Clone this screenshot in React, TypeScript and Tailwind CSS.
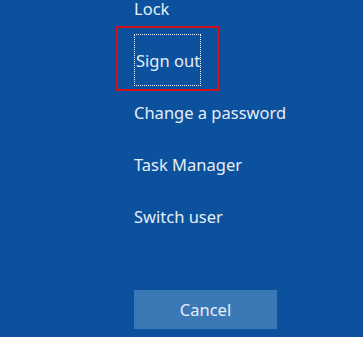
export default function App() {
  const items = ["Lock", "Sign out", "Change a password", "Task Manager", "Switch user"];
  return (
    <div
      className="w-[363px] h-[337px] overflow-hidden bg-[#0b519d] text-[#e6edf5]"
      style={{ fontFamily: '"Noto Sans", "Open Sans", sans-serif' }}
    >
      <div className="flex flex-col pl-[134px] -mt-[18px]">
        {items.map((t) => (
          <div key={t} className="relative h-[52px] flex items-center whitespace-nowrap">
            {t === "Sign out" ? (
              <>
                <div className="absolute left-[-18px] top-[-8px] w-[103px] h-[65px] border-2 border-[#d0101a]" />
                <div className="h-[52px] w-[67px] border border-dotted border-white flex items-center pl-[1px] pt-[3px] whitespace-nowrap">
                  <span className="text-[16.5px] leading-none whitespace-nowrap">{t}</span>
                </div>
              </>
            ) : (
              <span className="text-[16.5px] leading-none pt-[3px]">{t}</span>
            )}
          </div>
        ))}
        <div className="mt-[48px] w-[143px] h-[39px] bg-[#3b78b6] flex items-center justify-center pt-[2px]">
          <span className="text-[16.5px] leading-none">Cancel</span>
        </div>
      </div>
    </div>
  );
}
